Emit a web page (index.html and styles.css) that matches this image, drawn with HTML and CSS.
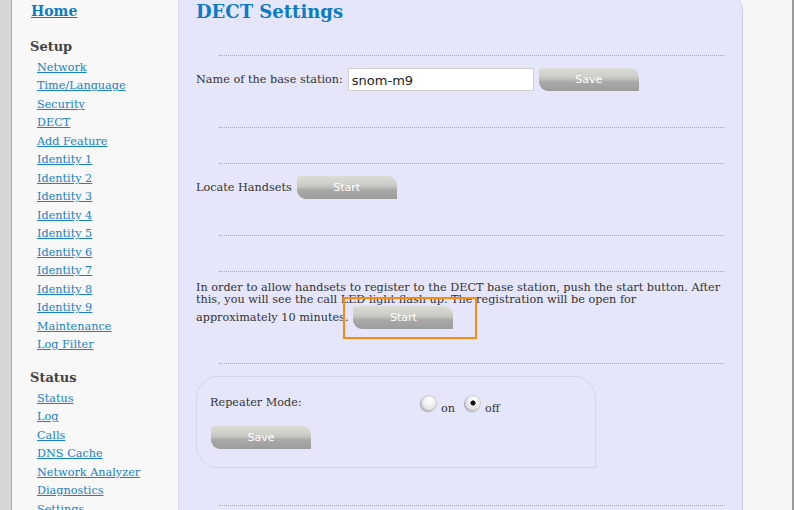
FILE: index.html
```html
<!DOCTYPE html>
<html>
<head>
<meta charset="utf-8">
<title>DECT Settings</title>
<link rel="stylesheet" href="styles.css">
</head>
<body>
<div class="page">
  <div class="edge"></div>
  <nav class="sidebar">
    <a class="home" href="#">Home</a>
    <h2 class="nav-title">Setup</h2>
    <ul class="menu">
      <li><a href="#">Network</a></li>
      <li><a href="#">Time/Language</a></li>
      <li><a href="#">Security</a></li>
      <li><a href="#">DECT</a></li>
      <li><a href="#">Add Feature</a></li>
      <li><a href="#">Identity 1</a></li>
      <li><a href="#">Identity 2</a></li>
      <li><a href="#">Identity 3</a></li>
      <li><a href="#">Identity 4</a></li>
      <li><a href="#">Identity 5</a></li>
      <li><a href="#">Identity 6</a></li>
      <li><a href="#">Identity 7</a></li>
      <li><a href="#">Identity 8</a></li>
      <li><a href="#">Identity 9</a></li>
      <li><a href="#">Maintenance</a></li>
      <li><a href="#">Log Filter</a></li>
    </ul>
    <h2 class="nav-title nav-title-status">Status</h2>
    <ul class="menu">
      <li><a href="#">Status</a></li>
      <li><a href="#">Log</a></li>
      <li><a href="#">Calls</a></li>
      <li><a href="#">DNS Cache</a></li>
      <li><a href="#">Network Analyzer</a></li>
      <li><a href="#">Diagnostics</a></li>
      <li><a href="#">Settings</a></li>
    </ul>
  </nav>
  <main class="panel">
    <h1 class="title">DECT Settings</h1>
    <div class="sep sep-first"></div>
    <div class="row row-top">
      <label class="label" for="base">Name of the base station:</label>
      <input class="text-input" id="base" type="text" value="snom-m9">
      <button class="btn">Save</button>
    </div>
    <div class="sep sep-after"></div>
    <div class="sep sep-between"></div>
    <div class="row row-top">
      <span class="label">Locate Handsets</span>
      <button class="btn">Start</button>
    </div>
    <div class="sep sep-after"></div>
    <div class="sep sep-between"></div>
    <p class="info">In order to allow handsets to register to the DECT base station, push the start button. After this, you will see the call LED light flash up. The registration will be open for<br>approximately 10 minutes.<button class="btn btn-inline">Start</button><span class="highlight"></span></p>
    <div class="sep sep-para"></div>
    <div class="repeater">
      <div class="rep-row">
        <span class="rep-label">Repeater Mode:</span>
        <span class="radios">
          <label class="radio-opt"><input type="radio" name="rep" class="radio"><span>on</span></label>
          <label class="radio-opt"><input type="radio" name="rep" class="radio" checked><span>off</span></label>
        </span>
      </div>
      <button class="btn btn-rep">Save</button>
    </div>
    <div class="sep sep-last"></div>
  </main>
  <div class="gutter"></div>
</div>
</body>
</html>
```
FILE: styles.css
```css
html, body {
  margin: 0;
  padding: 0;
  height: 510px;
  overflow: hidden;
}
body {
  font-family: "DejaVu Serif", serif;
  font-size: 11.25px;
  color: #333;
  background: #f6f6f6;
}
.page {
  display: flex;
  height: 510px;
  overflow: hidden;
}
.edge {
  flex: none;
  width: 11px;
  background: #d6d6d6;
  border-right: 1px solid #a8a8a8;
}
.sidebar {
  flex: none;
  width: 148px;
  padding: 2px 0 0 18px;
  background: #f8f8f8;
}
.sidebar a {
  color: #1a80c6;
  text-decoration: underline;
}
.home {
  display: block;
  margin-left: 1px;
  font-size: 14px;
  font-weight: bold;
  line-height: 18px;
  color: #0b7cc4 !important;
}
.nav-title {
  margin: 18px 0 3px 0;
  font-size: 13px;
  font-weight: bold;
  line-height: 18px;
  color: #444;
}
.nav-title-status {
  margin-top: 14px;
  margin-bottom: 3.5px;
}
.menu {
  list-style: none;
  margin: 0;
  padding: 0 0 0 7px;
}
.menu li {
  height: 18.47px;
  line-height: 18.47px;
  white-space: nowrap;
}
.panel {
  flex: none;
  position: relative;
  width: 529px;
  margin-top: -6px;
  padding: 7px 17px 0 17px;
  background: #e6e6fa;
  border-left: 1px solid #d8d8f0;
  border-right: 1px solid #d0d0ec;
  border-top-right-radius: 16px;
}
.title {
  margin: 0;
  font-size: 18px;
  line-height: 22px;
  font-weight: bold;
  color: #0b7cc4;
}
.sep {
  height: 0;
  margin-left: 23px;
  border-top: 1px dotted #a8a8b4;
}
.sep-first { margin-top: 32px; }
.sep-after { margin-top: 36px; }
.sep-between { margin-top: 35px; }
.sep-para { margin-top: 34px; }
.sep-last { margin-top: 37px; }
.row {
  display: flex;
  align-items: center;
  height: 23px;
}
.row-top { margin-top: 12px; }
.label {
  white-space: nowrap;
}
.text-input {
  box-sizing: border-box;
  width: 186px;
  height: 23px;
  margin: 0 0 0 5px;
  padding: 1px 3px 0 3px;
  border: 1px solid #cfcfcf;
  background: #fff;
  font-family: "DejaVu Sans", sans-serif;
  font-size: 13px;
  color: #222;
  outline: none;
}
.btn {
  box-sizing: border-box;
  width: 100px;
  height: 23px;
  margin: 0 0 0 5px;
  padding: 0;
  border: none;
  border-radius: 3px 9px 0 9px;
  background: linear-gradient(to bottom, #dcdcd6 0%, #cfcfca 35%, #bdbdb8 52%, #aaaaaa 58%, #9c9c9c 100%);
  color: #fff;
  font-family: "DejaVu Sans", sans-serif;
  font-size: 11px;
  line-height: 23px;
  text-align: center;
  cursor: pointer;
}
.info {
  position: relative;
  margin: 10px 0 0 0;
  line-height: 12px;
}
.btn-inline {
  display: inline-block;
  vertical-align: middle;
  margin-left: 5px;
}
.highlight {
  position: absolute;
  left: 147px;
  top: 15px;
  width: 134px;
  height: 42px;
  box-sizing: border-box;
  border: 2px solid #f98a12;
  pointer-events: none;
}
.repeater {
  box-sizing: border-box;
  width: 400px;
  height: 92px;
  margin-top: 12px;
  padding: 18px 0 0 14px;
  border: 1px solid #d2d2ec;
  border-radius: 22px 22px 0 22px;
}
.rep-row {
  display: flex;
  align-items: flex-start;
  height: 18px;
}
.rep-label {
  width: 211px;
  margin-left: -1px;
  line-height: 16px;
}
.radios {
  display: flex;
  gap: 10px;
  margin-top: 0;
}
.radio-opt {
  display: flex;
  align-items: flex-end;
  gap: 4px;
}
.radio-opt span {
  line-height: 13px;
  margin-bottom: -4px;
}
.radio {
  appearance: none;
  -webkit-appearance: none;
  width: 16px;
  height: 16px;
  margin: 0;
  border-radius: 50%;
  background: radial-gradient(circle at 55% 35%, #ffffff 0%, #efefef 40%, #cdcdcd 100%);
  box-shadow: inset 0 0 0 1px rgba(0, 0, 0, 0.13), -1px 1px 1px rgba(0, 0, 0, 0.28);
}
.radio:checked {
  background: radial-gradient(circle at 50% 50%, #111 0, #111 2.2px, transparent 2.9px),
              radial-gradient(circle at 55% 35%, #ffffff 0%, #efefef 40%, #cdcdcd 100%);
}
.btn-rep {
  display: block;
  margin: 13px 0 0 0;
}
.gutter {
  flex: 1;
  background: #f6f6f6;
  border-right: 2px solid #9a9a9a;
}
```
